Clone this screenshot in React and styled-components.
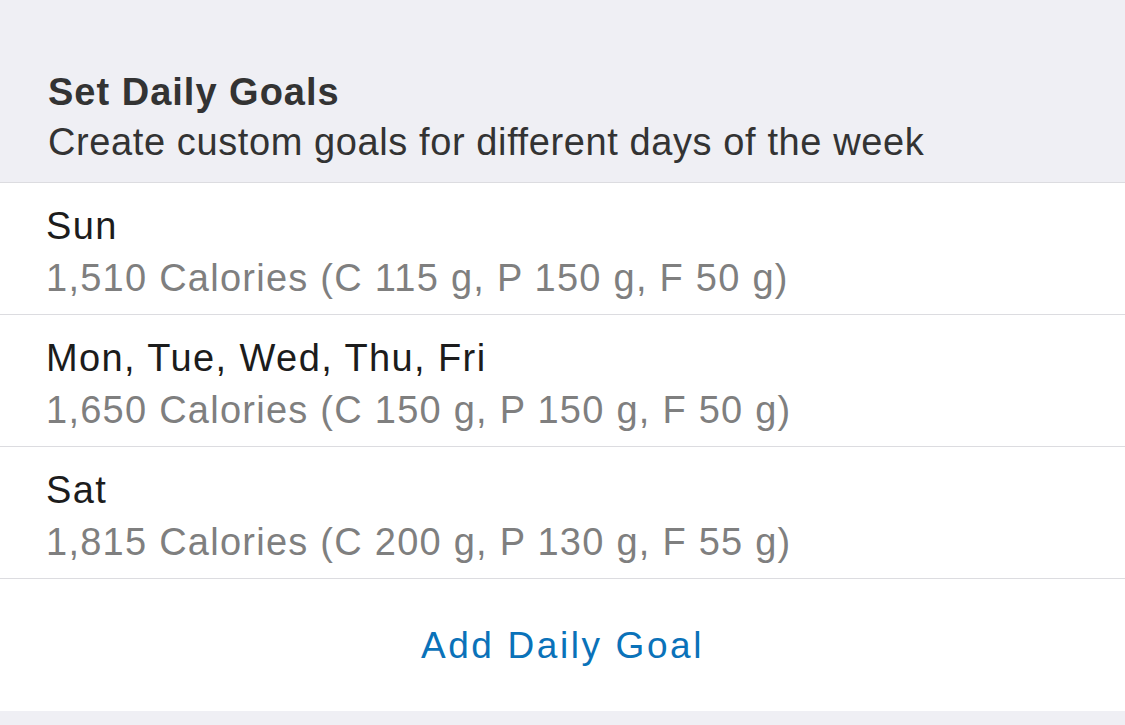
import styled, { createGlobalStyle } from "styled-components"

const GlobalStyle = createGlobalStyle`
  html, body {
    margin: 0;
    padding: 0;
    background: #efeff4;
    font-family: "Liberation Sans", Arial, sans-serif;
  }
`

const Page = styled.div`
  width: 1125px;
  height: 725px;
  background: #efeff4;
  overflow: hidden;
`

const Header = styled.div`
  height: 183px;
  box-sizing: border-box;
  padding: 67px 0 0 48px;
  border-bottom: 1px solid #dcdce0;
`

const Title = styled.div`
  font-size: 38px;
  font-weight: bold;
  letter-spacing: 1px;
  color: #333333;
  line-height: 50px;
`

const Subtitle = styled.div`
  font-size: 38px;
  letter-spacing: 0.6px;
  color: #333333;
  line-height: 50px;
`

const List = styled.div`
  background: #ffffff;
`

const Row = styled.div`
  height: 132px;
  box-sizing: border-box;
  padding: 17px 0 0 46px;
  border-bottom: 1px solid #dcdce0;
`

const RowTitle = styled.div`
  font-size: 38px;
  letter-spacing: 1.4px;
  color: #1c1c1c;
  line-height: 52px;
`

const RowDetail = styled.div`
  font-size: 38px;
  letter-spacing: 1.25px;
  color: #7f7f7f;
  line-height: 53px;
`

const AddButton = styled.button`
  display: flex;
  width: 100%;
  height: 132px;
  align-items: center;
  justify-content: center;
  background: #ffffff;
  border: none;
  padding: 2px 0 0;
  font-family: inherit;
  font-size: 37px;
  letter-spacing: 2.6px;
  color: #0a72b9;
  cursor: pointer;
`

const goals = [
  { days: "Sun", detail: "1,510 Calories (C 115 g, P 150 g, F 50 g)" },
  { days: "Mon, Tue, Wed, Thu, Fri", detail: "1,650 Calories (C 150 g, P 150 g, F 50 g)" },
  { days: "Sat", detail: "1,815 Calories (C 200 g, P 130 g, F 55 g)" },
]

export default function App() {
  return (
    <>
      <GlobalStyle />
      <Page>
        <Header>
          <Title>Set Daily Goals</Title>
          <Subtitle>Create custom goals for different days of the week</Subtitle>
        </Header>
        <List>
          {goals.map(({ days, detail }) => (
            <Row key={days}>
              <RowTitle>{days}</RowTitle>
              <RowDetail>{detail}</RowDetail>
            </Row>
          ))}
          <AddButton>Add Daily Goal</AddButton>
        </List>
      </Page>
    </>
  )
}
